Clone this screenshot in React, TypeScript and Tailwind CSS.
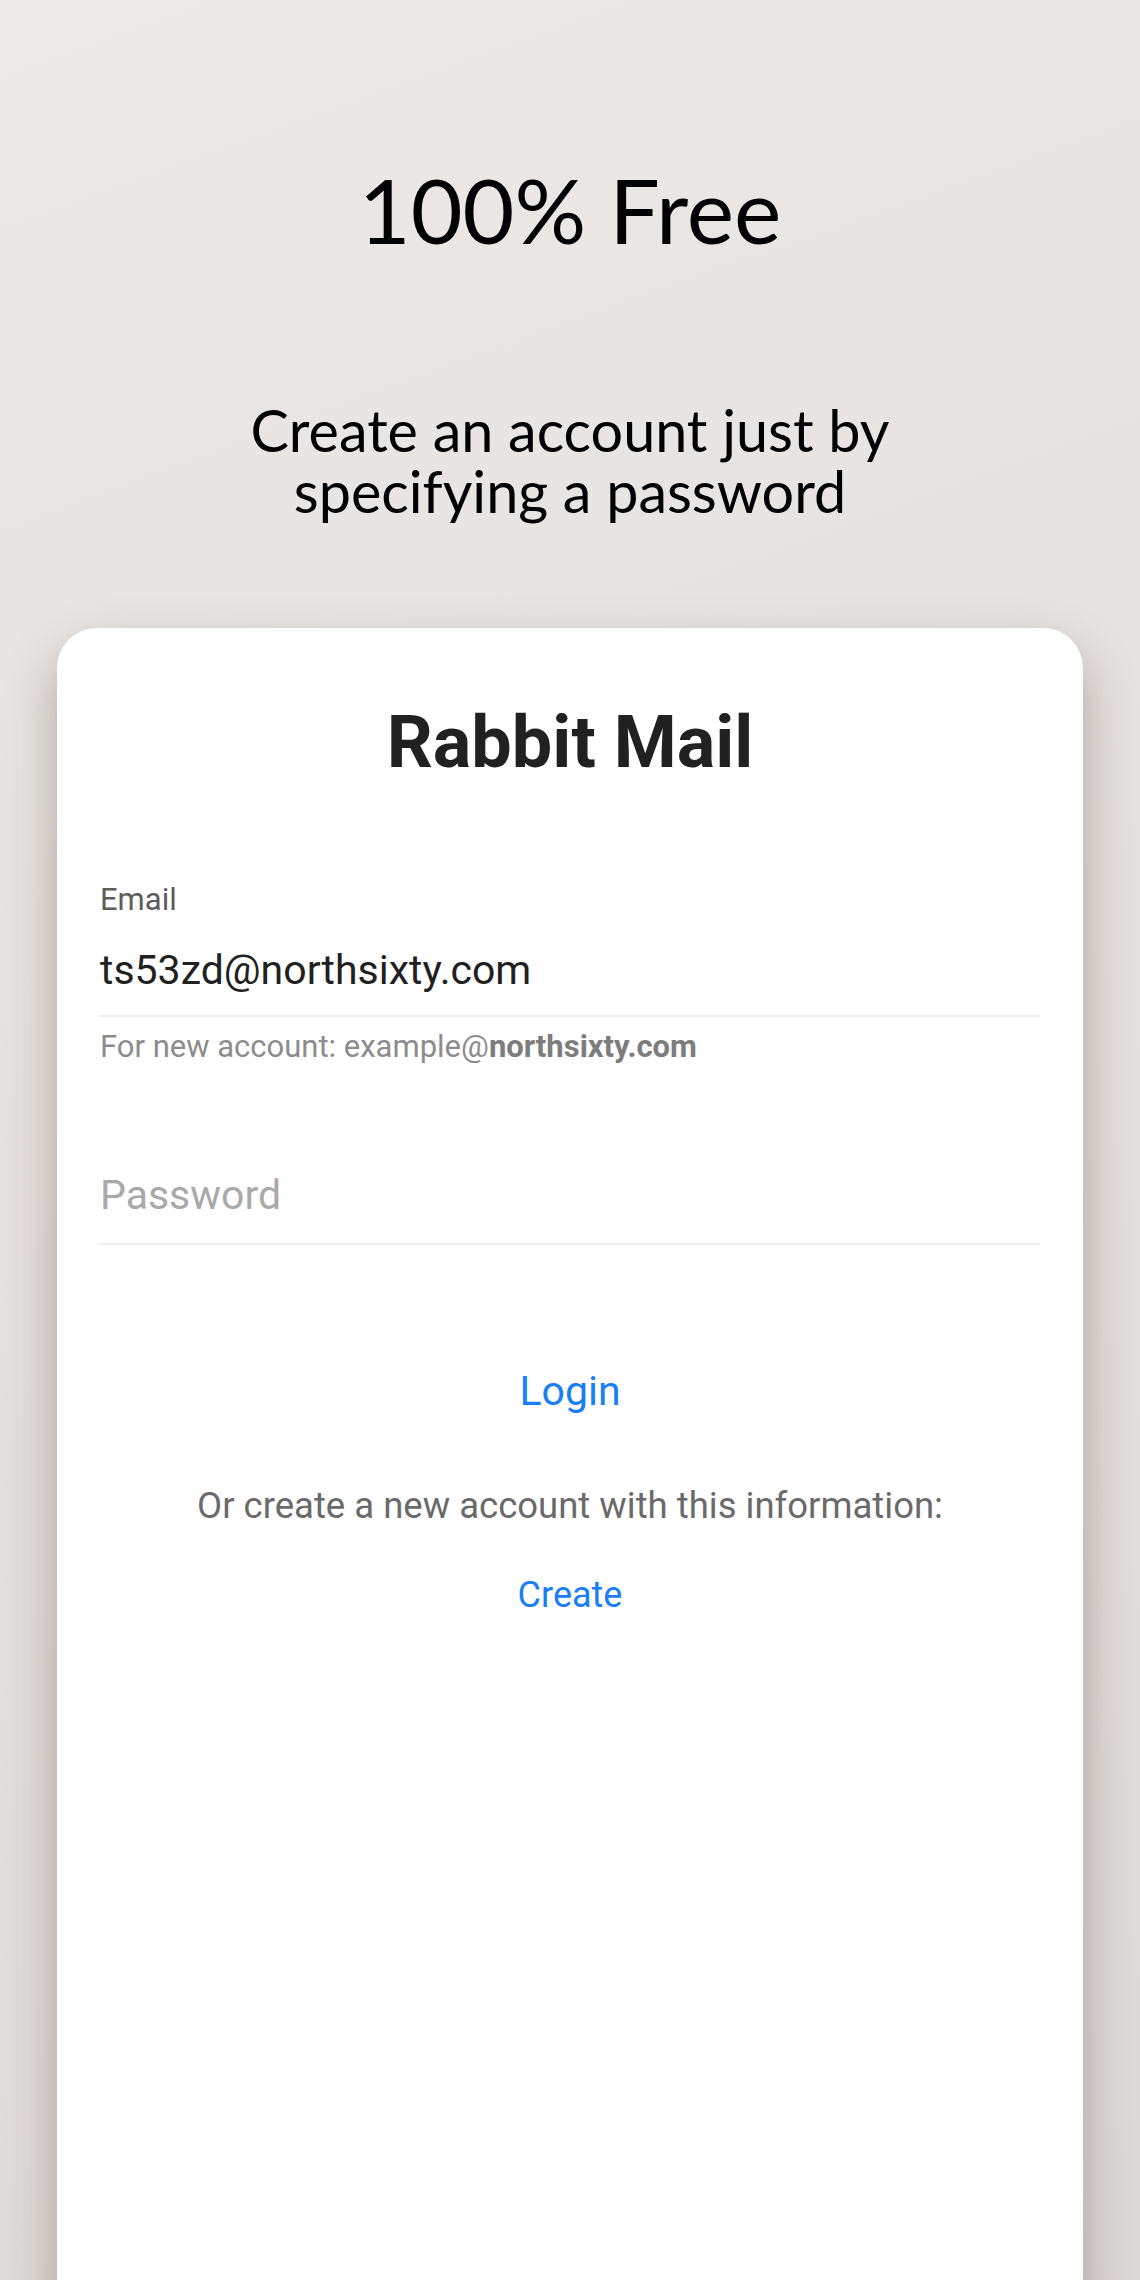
const Field = ({ children, className }: { children: React.ReactNode; className?: string }) => (
  <div className={`border-b-2 border-[#eeeeee] ${className ?? ""}`}>{children}</div>
);

export default function App() {
  return (
    <div className="h-[2280px] w-full overflow-hidden bg-[linear-gradient(160deg,#ece9e6_0%,#e5e1de_45%,#ddd9d6_100%)]">
      <div className="flex flex-col items-center text-black font-['Lato',sans-serif]">
        <h1 className="mt-[160px] text-[89.5px] leading-[100px] font-normal">100% Free</h1>
        <p className="mt-[139px] text-center text-[57.5px] leading-[61px]">
          Create an account just by
          <br />
          specifying a password
        </p>
      </div>

      <div className="mx-[57px] mt-[107px] h-[1800px] rounded-[40px] bg-white px-[43px] pt-[73px] shadow-[0_24px_50px_rgba(70,55,50,0.35)] font-['Roboto',sans-serif]">
        <h2 className="text-center text-[72px] leading-[84px] font-bold text-[#212121]">Rabbit Mail</h2>

        <div className="mt-[97px]">
          <div className="text-[31px] leading-[36px] text-[#5c5c5c]">Email</div>
          <Field className="mt-[28px] pb-[21px]">
            <div className="text-[41px] leading-[48px] text-[#212121]">ts53zd@northsixty.com</div>
          </Field>
          <div className="mt-[12px] text-[31px] leading-[36px] text-[#8c8c8c]">
            For new account: example@<span className="font-bold text-[#7d7d7d]">northsixty.com</span>
          </div>
        </div>

        <Field className="mt-[106px] pb-[24px]">
          <div className="text-[41px] leading-[48px] text-[#a9a9a9]">Password</div>
        </Field>

        <div className="flex flex-col items-center">
          <button className="mt-[122px] text-[41px] leading-[48px] text-[#1a7ef5]">Login</button>
          <p className="mt-[70px] text-[36.5px] leading-[42px] text-[#6a6a6a]">
            Or create a new account with this information:
          </p>
          <button className="mt-[47px] text-[36px] leading-[42px] text-[#1a7ef5]">Create</button>
        </div>
      </div>
    </div>
  );
}
